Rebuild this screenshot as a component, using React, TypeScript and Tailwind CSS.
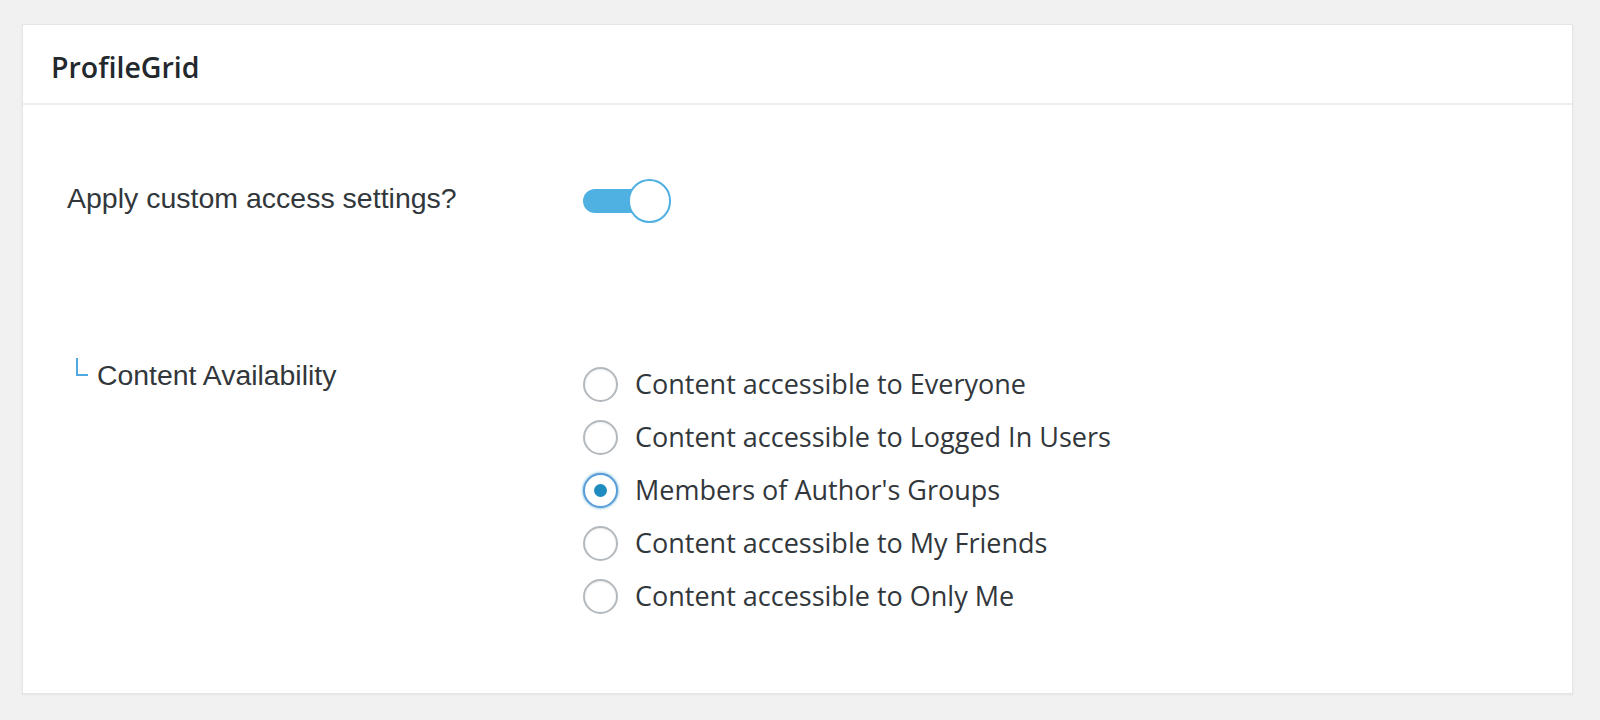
import React from "react";

const options = [
  "Content accessible to Everyone",
  "Content accessible to Logged In Users",
  "Members of Author's Groups",
  "Content accessible to My Friends",
  "Content accessible to Only Me",
];

function Radio({ checked, label }: { checked?: boolean; label: string }) {
  return (
    <label className="flex h-[53px] items-center">
      {checked ? (
        <span className="flex h-[35px] w-[35px] items-center justify-center rounded-full border-2 border-[#5b9dd9] bg-white shadow-[0_0_3px_rgba(30,140,190,0.8)]">
          <span className="h-[13px] w-[13px] rounded-full bg-[#1e8cbe]" />
        </span>
      ) : (
        <span className="h-[35px] w-[35px] rounded-full border-2 border-[#b4b9be] bg-white shadow-[inset_0_1px_2px_rgba(0,0,0,0.07)]" />
      )}
      <span className="ml-[17px] font-['Open_Sans',sans-serif] text-[27px] text-[#32373c]">
        {label}
      </span>
    </label>
  );
}

export default function App() {
  return (
    <div className="min-h-[720px] bg-[#f1f1f1] pt-[24px] pb-[26px] pl-[22px] pr-[27px]">
      <div className="h-[670px] border border-[#e5e5e5] bg-white shadow-[0_1px_2px_rgba(0,0,0,0.06)]">
        <div className="flex h-[80px] items-center border-b-2 border-[#eeeeee] pl-[28px] pt-[6px]">
          <h2 className="font-['Open_Sans',sans-serif] text-[28.5px] font-semibold text-[#23282d]">
            ProfileGrid
          </h2>
        </div>
        <div className="pl-[44px] pt-[74px]">
          <div className="flex h-[44px] items-center">
            <div className="mb-[5px] w-[516px] font-['Liberation_Sans',Arial,sans-serif] text-[28.5px] text-[#32373c]">
              Apply custom access settings?
            </div>
            <div className="relative h-[44px] w-[88px]">
              <div className="absolute left-0 top-[10px] h-[24px] w-[70px] rounded-full bg-[#4fb0e2]" />
              <div className="absolute left-[45px] top-0 h-[44px] w-[43px] rounded-full border-2 border-[#4fb0e2] bg-white" />
            </div>
          </div>
          <div className="mt-[134px] flex">
            <div className="flex w-[516px] items-start">
              <span className="ml-[9px] mt-[1px] h-[18px] w-[12px] border-b-2 border-l-2 border-[#4fa8e0]" />
              <span className="ml-[9px] font-['Liberation_Sans',Arial,sans-serif] text-[28.4px] leading-[36px] text-[#32373c]">
                Content Availability
              </span>
            </div>
            <div className="pt-[1px]">
              {options.map((o, i) => (
                <Radio key={o} label={o} checked={i === 2} />
              ))}
            </div>
          </div>
        </div>
      </div>
    </div>
  );
}
